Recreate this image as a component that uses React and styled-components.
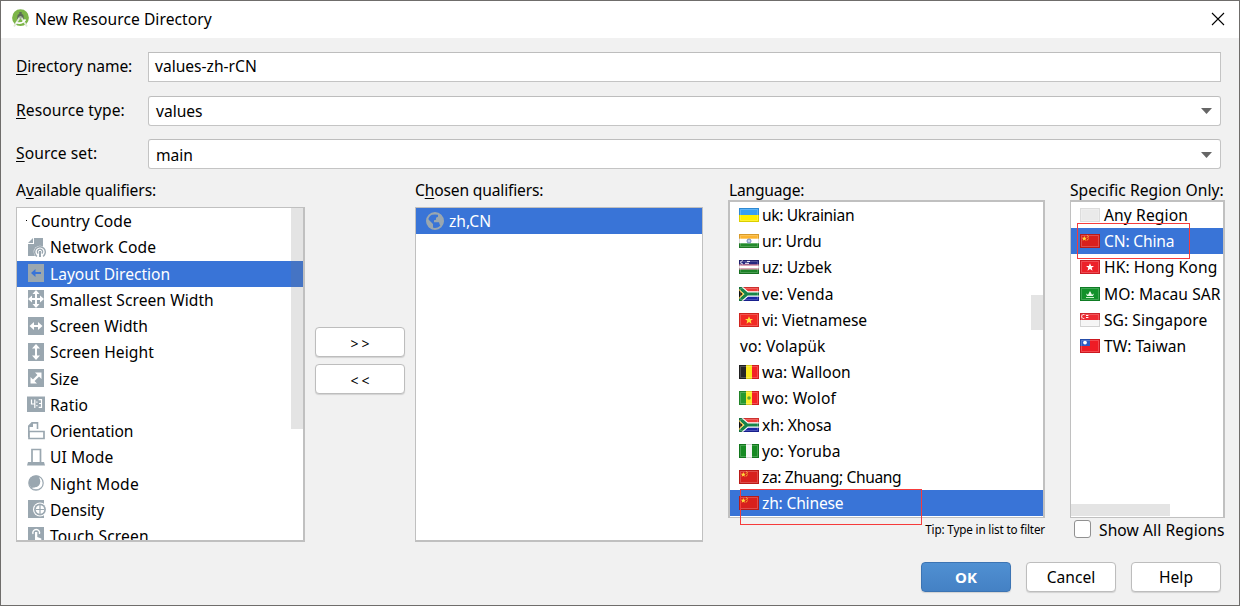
import React from "react";
import styled, { createGlobalStyle, css } from "styled-components";

const Global = createGlobalStyle`
  * { box-sizing: border-box; }
  body { margin: 0; background: #f1f1f1; overflow: hidden; }
  button, input { font: inherit; }
`;

const Window = styled.div`
  position: relative;
  width: 1240px;
  height: 606px;
  display: flex;
  flex-direction: column;
  border: 1px solid #6f6d6b;
  background: #f1f1f1;
  color: #000;
  font: 15.6px/20px "Noto Sans", "Open Sans", sans-serif;
  white-space: nowrap;
`;

const TitleBar = styled.header`
  height: 37px;
  flex: none;
  display: flex;
  align-items: center;
  padding: 0 14px 2px 10px;
  background: #fff;
`;
const Title = styled.h1`
  flex: 1;
  margin: 0 0 0 5px;
  font-size: inherit;
  font-weight: 400;
  letter-spacing: 0.06px;
`;

const Form = styled.section`
  display: flex;
  flex-direction: column;
  gap: 13.5px;
  padding: 14px 18px 0 15px;
`;
const FormRow = styled.div`
  display: flex;
  height: 30px;
`;
const FieldLabel = styled.label`
  width: 132px;
  padding-top: 4px;
  letter-spacing: ${(p) => p.$track || 0}px;
`;
const Mnemonic = styled.span`
  text-decoration: underline;
  text-decoration-thickness: 1px;
  text-underline-offset: 2px;
  text-decoration-skip-ink: none;
`;
const Field = styled.div`
  flex: 1;
  display: flex;
  align-items: center;
  justify-content: space-between;
  padding: 0 8px 2px 6px;
  border: 1px solid #c4c4c4;
  border-top-color: #bdbdbd;
  background: #fff;
  ${(p) => p.$combo && css`
    border-radius: 3px;
    padding: 1px 8px 0 7px;
  `}
`;

const Columns = styled.main`
  display: flex;
  padding: 11px 14px 0 15px;
`;
const Column = styled.section`
  display: flex;
  flex-direction: column;
  width: ${(p) => p.$width}px;
  margin-right: ${(p) => p.$after || 0}px;
`;
const Heading = styled.h2`
  height: ${(p) => p.$height}px;
  margin: 0;
  padding-left: ${(p) => p.$indent || 0}px;
  font-size: inherit;
  font-weight: 400;
  letter-spacing: ${(p) => p.$track || 0}px;
`;
const List = styled.div`
  position: relative;
  height: ${(p) => p.$height}px;
  overflow: hidden;
  border: solid #c0c0c0;
  border-width: ${(p) => p.$border};
  background: #fff;
`;
const Item = styled.div`
  display: flex;
  align-items: center;
  height: ${(p) => p.$height || 26.2}px;
  padding-left: ${(p) => p.$indent || 9}px;
  gap: ${(p) => p.$gap || 0}px;
  letter-spacing: ${(p) => p.$track || 0}px;
  ${(p) => p.$selected && css`
    background: #3974d7;
    color: #fff;
  `}
`;
const ScrollThumb = styled.div`
  position: absolute;
  background: rgba(120, 120, 120, 0.2);
  ${(p) => p.$area}
`;
const Transfer = styled.div`
  width: 90px;
  margin: 147px 10px 0;
  display: flex;
  flex-direction: column;
  gap: 7px;
`;
const Button = styled.button`
  width: 90px;
  height: 30px;
  padding: ${(p) => (p.$arrows ? "3px 0 0" : "0")};
  border: 1px solid ${(p) => (p.$primary ? "#3c74b3" : "#bdbdbd")};
  border-radius: 4px;
  background: ${(p) => (p.$primary ? "linear-gradient(#5090d2, #4481c4)" : "#fff")};
  color: ${(p) => (p.$primary ? "#fff" : "#000")};
  font-weight: ${(p) => (p.$primary ? 700 : 400)};
  box-shadow: 0 1px 1px rgba(0, 0, 0, 0.13);
  ${(p) => p.$primary && css`
    font-size: 15px;
  `}
  ${(p) => p.$arrows && css`
    font-size: 14px;
    letter-spacing: 3px;
    text-indent: 3px;
  `}
`;
const Tip = styled.div`
  align-self: flex-end;
  font-size: 11.7px;
  letter-spacing: -0.16px;
  line-height: 16px;
  padding-top: 3px;
`;
const CheckRow = styled.label`
  display: flex;
  gap: 8px;
  padding: 2px 0 0 4px;
  letter-spacing: 0.08px;
`;
const CheckBox = styled.span`
  width: 17px;
  height: 18px;
  flex: none;
  border: 1px solid #919191;
  border-radius: 3px;
  background: #fff;
`;
const Footer = styled.footer`
  display: flex;
  justify-content: flex-end;
  gap: 15px;
  padding: 0 18px 13px;
  margin-top: auto;
`;
const Highlight = styled.div`
  position: absolute;
  border: 1px solid #f63b3b;
  left: ${(p) => p.$x}px;
  top: ${(p) => p.$y}px;
  width: ${(p) => p.$w}px;
  height: ${(p) => p.$h}px;
`;
const Glyph = styled.svg`
  flex: none;
  display: block;
`;

const G = "#9aa7b0";
const KINDS = {
  network: <><path d="M6 0h9v9a6 6 0 0 0-6 9H0V6h6z" fill={G} /><path d="M0 5L5 0v5z" fill={G} /><circle cx="12" cy="14" r="6.3" fill="#fff" /><path d="M9 18.4a5.3 5.3 0 1 1 6 0M10.2 15.6a2.6 2.6 0 1 1 3.6 0" fill="none" stroke={G} strokeWidth="1.4" /><path d="M12 13v6" stroke={G} strokeWidth="2" /></>,
  direction: <><path d="M0 0h16v18H0z" fill={G} /><path d="M4 9h9" stroke="#3974d7" strokeWidth="2" /><path d="M3 9l4.5-4v8z" fill="#3974d7" /></>,
  smallest: <><path d="M0 0h16v18H0z" fill={G} /><path d="M8 2v14M2 9h12" stroke="#fff" strokeWidth="2" /><path d="M8 0l3.5 4h-7zM8 18l3.5-4h-7zM0 9l4-3.5v7zM16 9l-4-3.5v7z" fill="#fff" /></>,
  width: <><path d="M0 0h16v18H0z" fill={G} /><path d="M4 9h8" stroke="#fff" strokeWidth="2" /><path d="M1.5 9L6 5v8zM14.5 9L10 5v8z" fill="#fff" /></>,
  height: <><path d="M0 0h16v18H0z" fill={G} /><path d="M8 4v10" stroke="#fff" strokeWidth="2" /><path d="M8 1l4 4.5H4zM8 17l4-4.5H4z" fill="#fff" /></>,
  size: <><path d="M0 0h16v18H0z" fill={G} /><path d="M5 12l6-6" stroke="#fff" strokeWidth="2.4" /><path d="M7 3.5h6.5V10zM2.5 8v6.5H9z" fill="#fff" /></>,
  ratio: <><path d="M-1 1.5h18v15.5H-1z" fill={G} /><path d="M3.5 4.5v4.5H7M6.8 4.5v8.5M10.7 4.7H13.5v7.6h-2.8M11 8.5h2.5" stroke="#fff" strokeWidth="1.2" fill="none" /><path d="M8.3 6.5h1.2v1.3H8.3zM8.3 10h1.2v1.3H8.3z" fill="#fff" /></>,
  orientation: <><path d="M.8 6v9M.8 7V4L4 .9h5.5V7" fill="none" stroke={G} strokeWidth="1.6" /><path d="M0 5L5 0v5z" fill={G} /><path d="M1 9.5h15v7H1z" fill="#fff" stroke={G} strokeWidth="1.7" /></>,
  ui: <><path d="M4 14V1.5h8.5V14" fill="none" stroke={G} strokeWidth="1.7" /><path d="M0 14h16l1 3.5H-1z" fill={G} /></>,
  night: <><circle cx="8" cy="9" r="7.2" fill="#fff" stroke={G} strokeWidth="1.2" /><path d="M11 2A7.2 7.2 0 1 0 14.8 11.5Q12.5 15 8 15.2 4.5 15 3.5 14q9.5-1 7.5-12z" fill={G} /><circle cx="6.6" cy="7.6" r="5.7" fill={G} /></>,
  density: <><path d="M0 0h16v18H0z" fill={G} /><circle cx="12" cy="9.5" r="7" fill="#fff" /><circle cx="12" cy="9.5" r="5.9" fill={G} /><circle cx="12" cy="9.5" r="4.3" fill="#fff" /><path d="M12 5v9M7.5 9.5h9" stroke={G} strokeWidth="1.2" /></>,
  touch: <><path d="M0 0h16v18H0z" fill={G} /><path d="M5 7a3.4 3.4 0 1 1 6.4 0" fill="none" stroke="#fff" strokeWidth="1.4" /><path d="M7 5h2.3v5l4 1.5V18H6l-2.5-5 3.5.5z" fill="#fff" /></>,
};
const QualifierIcon = ({ kind }) => (
  <Glyph width="19" height="19" viewBox="-1 0 19 19">{KINDS[kind]}</Glyph>
);

const STAR = "M0-4L1.1-1.3 4-1.2 1.7.6 2.5 3.5 0 1.8-2.5 3.5-1.7.6-4-1.2-1.1-1.3z";
const china = <><path d="M0 0h20v14H0z" fill="#d8201d" /><path d={STAR} transform="translate(4.3 4.5) scale(.65)" fill="#ffd93b" /><path d="M7 1.5l1.5 1L7.5 4M8.5 4.5l-1.5 2" stroke="#f5b32e" fill="none" /></>;
const southAfrica = <><path d="M0 0h20v7H0z" fill="#ee3b37" /><path d="M0 7h20v7H0z" fill="#1b25a5" /><path d="M0 0l8 7-8 7M8 7h12" stroke="#fff" strokeWidth="5.4" fill="none" /><path d="M0 0l8 7-8 7M8 7h12" stroke="#178448" strokeWidth="3.2" fill="none" /><path d="M0 2l5 5-5 5z" fill="#f3c43a" /><path d="M0 3.6L3.4 7 0 10.4z" fill="#111" /></>;
const tri = (a, b, c) => <><path d="M0 0h7v14H0z" fill={a} /><path d="M7 0h6v14H7z" fill={b} /><path d="M13 0h7v14h-7z" fill={c} /></>;
const FLAGS = {
  uk: <><path d="M0 0h20v7H0z" fill="#36a0f5" /><path d="M0 7h20v7H0z" fill="#fff000" /></>,
  in: <><path d="M0 0h20v14H0z" fill="#fff" /><path d="M0 0h20v4.7H0z" fill="#fbb430" /><path d="M0 9.3h20V14H0z" fill="#238b2b" /><circle cx="10" cy="7" r="2" fill="#c5cfe8" stroke="#6f87bf" /></>,
  uz: <><path d="M0 0h20v14H0z" fill="#fff" /><path d="M0 0h20v4.6H0z" fill="#27277f" /><path d="M0 4.6h20v1H0zM0 8.6h20v1H0z" fill="#b94a68" /><path d="M0 9.6h20V14H0z" fill="#1b8226" /><path d="M4 .8a1.6 1.6 0 1 0 0 3M6 3.3h4M8 1.4h3" stroke="#fff" fill="none" /></>,
  za: southAfrica,
  vn: <><path d="M0 0h20v14H0z" fill="#f12a24" /><path d={STAR} transform="translate(10 7.2)" fill="#ffe23b" /></>,
  be: tri("#262626", "#fbe91d", "#f32225"),
  sn: <>{tri("#27992f", "#fbed2a", "#f32225")}<circle cx="10" cy="7" r="1.8" fill="#61a92b" /></>,
  ng: tri("#168a22", "#f6f6f6", "#168a22"),
  cn: china,
  any: <path d="M0 0h20v14H0z" fill="#eaeaea" />,
  hk: <><path d="M0 0h20v14H0z" fill="#ec2029" /><path d={STAR} transform="translate(10 7.2)" fill="#fff" /></>,
  mo: <><path d="M0 0h20v14H0z" fill="#12912a" /><path d="M6 6.5l2 1.3L10 4l2 3.8 2-1.3-1 2.6H7z" fill="#e9fbe9" /><path d="M6 10.5h8" stroke="#c9efcb" /></>,
  sg: <><path d="M0 0h20v14H0z" fill="#f5f5f5" /><path d="M0 0h20v7H0z" fill="#ee2c33" /><path d="M4.3 1.6a2 2 0 1 0 0 3.8M6 2.5h2.4M6 4.5h2.4" stroke="#fff" fill="none" /></>,
  tw: <><path d="M0 0h20v14H0z" fill="#ee1c25" /><path d="M0 0h10v7H0z" fill="#2d5ac4" /><circle cx="5" cy="3.6" r="1.9" fill="#fff" /></>,
};
const Flag = ({ code }) => (
  <Glyph width="20" height="14" viewBox="0 0 20 14">
    {FLAGS[code]}
    <path d="M1.5 1.5h17v11h-17z" fill="none" stroke="#fff" strokeOpacity=".2" />
    <path d="M.5.5h19v13H.5z" fill="none" stroke="#000" strokeOpacity={code === "any" ? 0.06 : 0.14} />
  </Glyph>
);

const Arrow = () => (
  <Glyph width="11" height="6" viewBox="0 0 11 6"><path d="M0 0h11L5.5 6z" fill="#666" /></Glyph>
);
const AppLogo = () => (
  <Glyph width="19" height="19" viewBox="0 0 19 19">
    <circle cx="9.5" cy="8.7" r="8.4" fill="#7cb548" />
    <path d="M6.3 10V8a3.2 3.2 0 0 1 6.4 0v2z" fill="#5c6a58" />
    <path d="M9.5 3v3" stroke="#5c6a58" strokeWidth="2.4" />
    <path d="M3 17.5L8.7 8.5M16 17.5L10.3 8.5" stroke="#dfe8d8" strokeWidth="1.8" />
    <path d="M5 13.4q5.5 2.4 9.6-3" stroke="#fff" strokeWidth="1.6" fill="none" />
    <circle cx="9.5" cy="8.4" r="1.4" fill="#a9b8a0" />
  </Glyph>
);

const qualifiers = [
  ["network", "Network Code", 0.14],
  ["direction", "Layout Direction", 0],
  ["smallest", "Smallest Screen Width", 0.05],
  ["width", "Screen Width", 0.1],
  ["height", "Screen Height", 0.1],
  ["size", "Size", 0],
  ["ratio", "Ratio", 0.1],
  ["orientation", "Orientation", -0.07],
  ["ui", "UI Mode", 0.1],
  ["night", "Night Mode", 0.22],
  ["density", "Density", -0.1],
  ["touch", "Touch Screen", 0.12],
];
const languages = [
  ["uk", "uk: Ukrainian", -0.36], ["in", "ur: Urdu", -0.2], ["uz", "uz: Uzbek", -0.1],
  ["za", "ve: Venda", 0.08], ["vn", "vi: Vietnamese", -0.07], [null, "vo: Volapük", 0.1],
  ["be", "wa: Walloon", 0], ["sn", "wo: Wolof", 0.2], ["za", "xh: Xhosa", -0.1],
  ["ng", "yo: Yoruba", 0.1], ["cn", "za: Zhuang; Chuang", -0.36], ["cn", "zh: Chinese", -0.18],
];
const regions = [
  ["any", "Any Region", 0.12], ["cn", "CN: China", -0.16], ["hk", "HK: Hong Kong", 0.1],
  ["mo", "MO: Macau SAR", 0.08], ["sg", "SG: Singapore", 0.05], ["tw", "TW: Taiwan", 0],
];

export default function App() {
  return (
    <Window>
      <Global />
      <TitleBar>
        <AppLogo />
        <Title>New Resource Directory</Title>
        <Glyph width="14" height="14" viewBox="0 0 14 14"><path d="M1 1l12 12M13 1L1 13" stroke="#000" strokeWidth="1.1" /></Glyph>
      </TitleBar>
      <Form>
        <FormRow><FieldLabel $track={-0.07}><Mnemonic>D</Mnemonic>irectory name:</FieldLabel><Field>values-zh-rCN</Field></FormRow>
        <FormRow><FieldLabel $track={0.08}><Mnemonic>R</Mnemonic>esource type:</FieldLabel><Field $combo>values<Arrow /></Field></FormRow>
        <FormRow><FieldLabel $track={0.1}><Mnemonic>S</Mnemonic>ource set:</FieldLabel><Field $combo>main<Arrow /></Field></FormRow>
      </Form>
      <Columns>
        <Column $width={289}>
          <Heading $height={27} $track={-0.1}>A<Mnemonic>v</Mnemonic>ailable qualifiers:</Heading>
          <List $height={335} $border="1px 2px 2px 1px">
            <Item $height={26.25} $gap={3} $track={0.04}>
              <Glyph width="2" height="2"><path d="M0 0h1v1H0z" /></Glyph>Country Code
            </Item>
            {qualifiers.map(([kind, name, track]) => (
              <Item key={kind} $height={26.25} $indent={10} $gap={4} $track={track} $selected={kind === "direction"}>
                <QualifierIcon kind={kind} />{name}
              </Item>
            ))}
            <ScrollThumb $area="right:0;top:0;width:12px;height:221px;" />
          </List>
        </Column>
        <Transfer>
          <Button $arrows>&gt;&gt;</Button>
          <Button $arrows>&lt;&lt;</Button>
        </Transfer>
        <Column $width={288} $after={25}>
          <Heading $height={27} $track={-0.16}>C<Mnemonic>h</Mnemonic>osen qualifiers:</Heading>
          <List $height={335} $border="1px 1px 2px 1px">
            <Item $indent={10} $gap={5} $selected>
              <Glyph width="18" height="18" viewBox="0 0 18 18">
                <circle cx="9" cy="9" r="8" fill="none" stroke={G} strokeWidth="2" />
                <path d="M1 6l6 6v5.5L3 15 1 11zM4 2.5h8v2.3l-2 1v2l-2 .5v2h5l1 3.2h2l1.5-4L15 3l-4-2z" fill={G} />
              </Glyph>
              zh,CN
            </Item>
          </List>
        </Column>
        <Column $width={317} $after={25}>
          <Heading $height={20} $indent={1} $track={-0.2}>Language:</Heading>
          <List $height={318} $border="2px 2px 1px 2px">
            {languages.map(([code, name, track]) => (
              <Item key={name} $gap={3} $indent={code ? 9 : 10} $track={track} $selected={name === "zh: Chinese"}>
                {code && <Flag code={code} />}{name}
              </Item>
            ))}
            <ScrollThumb $area="right:0;top:93px;width:12px;height:35px;" />
          </List>
          <Tip>Tip: Type in list to filter</Tip>
        </Column>
        <Column $width={155}>
          <Heading $height={20} $track={0.06}>Specific Region Only:</Heading>
          <List $height={318} $border="2px 2px 1px 1px">
            {regions.map(([code, name, track]) => (
              <Item key={name} $gap={4} $track={track} $selected={code === "cn"}>
                <Flag code={code} />{name}
              </Item>
            ))}
            <ScrollThumb $area="left:0;bottom:1px;width:99px;height:12px;" />
          </List>
          <CheckRow><CheckBox />Show All Regions</CheckRow>
        </Column>
      </Columns>
      <Footer>
        <Button $primary>OK</Button>
        <Button>Cancel</Button>
        <Button>Help</Button>
      </Footer>
      <Highlight $x={739} $y={488} $w={182} $h={36} />
      <Highlight $x={1076} $y={222} $w={113} $h={36} />
    </Window>
  );
}
